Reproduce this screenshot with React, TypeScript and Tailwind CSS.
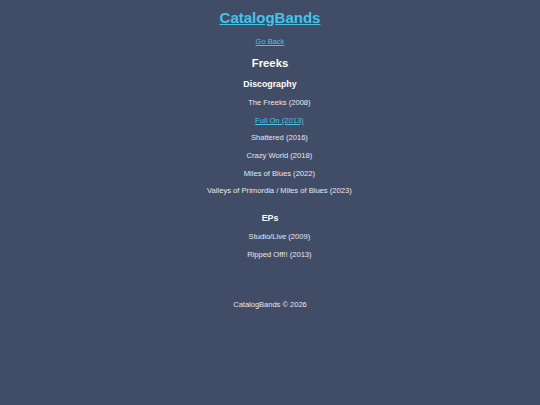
import React from "react";

const albums = [
  "The Freeks (2008)",
  "Full On (2013)",
  "Shattered (2016)",
  "Crazy World (2018)",
  "Miles of Blues (2022)",
  "Valleys of Primordia / Miles of Blues (2023)",
];

const eps = ["Studio/Live (2009)", "Ripped Off!! (2013)"];

export default function App() {
  return (
    <div
      className="min-h-[405px] w-full bg-[#414c67] text-[#e6e8ee] flex flex-col items-center pt-[8px]"
      style={{ fontFamily: '"Liberation Sans", Arial, sans-serif' }}
    >
      <a href="#" className="text-[15px] font-bold leading-[20px] text-[#44c4e6] underline">
        CatalogBands
      </a>
      <a href="#" className="mt-[8px] text-[7.5px] leading-[12px] text-[#44c4e6] underline">
        Go Back
      </a>
      <h2 className="mt-[8px] text-[11.3px] font-bold leading-[14px] text-white">Freeks</h2>
      <h3 className="mt-[8px] text-[8.8px] font-bold leading-[12px] text-white">Discography</h3>
      <ul className="mt-[4.2px] pl-[18.8px] flex flex-col items-center">
        {albums.map((a) =>
          a === "Full On (2013)" ? (
            <li key={a} className="text-[7.6px] leading-[17.6px]">
              <a href="#" className="text-[#44c4e6] underline">
                {a}
              </a>
            </li>
          ) : (
            <li key={a} className="text-[7.6px] leading-[17.6px]">
              {a}
            </li>
          )
        )}
      </ul>
      <h3 className="mt-[12.2px] text-[8.8px] font-bold leading-[12px] text-white">EPs</h3>
      <ul className="mt-[4.2px] pl-[18.8px] flex flex-col items-center">
        {eps.map((e) => (
          <li key={e} className="text-[7.6px] leading-[17.6px]">
            {e}
          </li>
        ))}
      </ul>
      <footer className="mt-[35.6px] text-[7.5px] leading-[12px]">CatalogBands © 2026</footer>
    </div>
  );
}
